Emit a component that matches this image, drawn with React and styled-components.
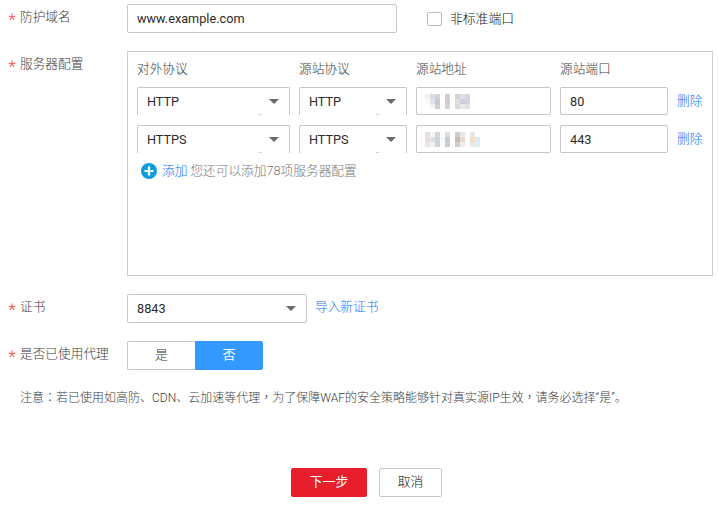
import React from "react";
import styled, { createGlobalStyle, css } from "styled-components";

const GlobalStyle = createGlobalStyle`
  *, *::before, *::after { box-sizing: border-box; }
  body {
    margin: 0;
    background: #fff;
    font: 300 12.7px/20px Roboto, "Noto Sans CJK SC", sans-serif;
    color: #3c3c3c;
  }
`;

const Page = styled.main`
  width: 718px;
  height: 507px;
  padding-top: 4px;
  overflow: hidden;
`;

const FormRow = styled.div`
  display: flex;
  height: ${(p) => p.$height}px;
  margin-bottom: 18px;
`;

const Label = styled.label`
  display: flex;
  width: 127px;
  flex: none;
  padding: 3px 0 0 8px;
  white-space: nowrap;
`;

const Star = styled.svg`
  width: 8px;
  height: 8px;
  margin: 6px 4px 0 0;
  flex: none;
  stroke: #ff5c55;
  stroke-width: 1.1;
  fill: none;
`;

const frame = css`
  border: 1px solid #c6c6c6;
  border-radius: 2px;
  background: #fff;
  color: #2b2b2b;
  font: 400 12.7px/20px Roboto, "Noto Sans CJK SC", sans-serif;
`;

const Input = styled.input`
  ${frame}
  width: ${(p) => p.$width}px;
  height: ${(p) => p.$height || 28}px;
  padding: 0 9px;
  outline: 0;
`;

const SelectBox = styled.div`
  ${frame}
  display: flex;
  align-items: center;
  justify-content: space-between;
  width: ${(p) => p.$width}px;
  height: ${(p) => p.$height || 28}px;
  padding: 0 10px 0 9px;
  ${(p) =>
    p.$open &&
    css`
      border-bottom: 0;
      border-radius: 2px 2px 0 0;
      background: linear-gradient(#d4d4d4, #d4d4d4) right 27px bottom 0 / 3px 1px no-repeat;
    `}
`;

const Arrow = styled.span`
  border: 5px solid transparent;
  border-top: 5px solid #6b6b6b;
  border-bottom: 0;
`;

const CheckRow = styled.label`
  display: flex;
  align-items: center;
  gap: 8px;
  margin-left: 30px;
  color: #111;
  font-size: 12.8px;
`;

const CheckBox = styled.span`
  width: 15px;
  height: 14px;
  border: 1px solid #bbb;
  border-radius: 2px;
`;

const Panel = styled.section`
  width: 586px;
  height: 225px;
  border: 1px solid #ccc;
  padding: 7px 0 0 9px;
`;

const Grid = styled.div`
  display: grid;
  grid-template-columns: 153px 108px 135px 108px 30px;
  column-gap: 9px;
  align-items: center;
  height: ${(p) => p.$height}px;
  margin-bottom: ${(p) => p.$gap}px;
`;

const Link = styled.a`
  color: #0f74ff;
  white-space: nowrap;
`;

const AddRow = styled.div`
  display: flex;
  align-items: center;
  height: 16px;
  padding-left: 4px;
  color: #777;
`;

const AddIcon = styled.svg`
  width: 16px;
  height: 16px;
  margin-right: 5px;
`;

const Hint = styled.span`
  margin-left: 3px;
`;

const MaskedField = styled.div`
  ${frame}
  height: 28px;
  padding: 6px 0 0 8px;
`;

const Mosaic = styled.svg`
  display: block;
`;

const ImportLink = styled(Link)`
  margin: 3px 0 0 8px;
`;

const Segment = styled.button`
  width: 68px;
  height: 29px;
  padding: 0 0 1px;
  border: 1px solid ${(p) => (p.$active ? "#3399ff" : "#c6c6c6")};
  border-right-width: ${(p) => (p.$active ? 1 : 0)}px;
  border-radius: ${(p) => (p.$active ? "0 2px 2px 0" : "2px 0 0 2px")};
  background: ${(p) => (p.$active ? "#3399ff" : "#fff")};
  color: ${(p) => (p.$active ? "#fff" : "#333")};
  font: ${(p) => (p.$active ? 400 : 300)} 13px/20px Roboto, "Noto Sans CJK SC", sans-serif;
`;

const Note = styled.p`
  height: 20px;
  margin: -1px 0 61px 20px;
  font-size: 12px;
  white-space: nowrap;
`;

const CenteredMark = styled.span`
  font-family: "Noto Sans CJK TC", sans-serif;
`;

const Actions = styled.div`
  display: flex;
  gap: 12px;
  padding-left: 291px;
`;

const Button = styled.button`
  width: ${(p) => (p.$primary ? 76 : 63)}px;
  height: 29px;
  padding: 0 0 1px;
  border: 1px solid ${(p) => (p.$primary ? "#e71f2d" : "#c6c6c6")};
  border-radius: 2px;
  background: ${(p) => (p.$primary ? "#e71f2d" : "#fff")};
  color: ${(p) => (p.$primary ? "#fff" : "#111")};
  font: ${(p) => (p.$primary ? 400 : 300)} 12.8px/20px Roboto, "Noto Sans CJK SC", sans-serif;
`;

const servers = [
  {
    protocol: "HTTP",
    port: "80",
    mask: [
      ["#f8f1e5", "#dcdce6", "#d3d3dc", "#fff", "#d2cdd2", "#fff", "#d5d1d8", "#dfdfe7", "#d4d4dd"],
      ["#fcf7ef", "#e0e4f0", "#c8c8d0", "#fff", "#d2cdd2", "#fff", "#e5dcd5", "#c9cedc", "#d4d4dd"],
      ["#fff", "#f4f4f4", "#cdcdd4", "#fff", "#d9d2d2", "#fff", "#d8d8df", "#f0e8e0", "#e4e1e2"],
    ],
  },
  {
    protocol: "HTTPS",
    port: "443",
    mask: [
      ["#eadddd", "#f7f7f8", "#d5d5dc", "#fff", "#dcdce2", "#fff", "#d2cbcd", "#ece6e6", "#fff", "#e8e6e6", "#fff"],
      ["#eadddd", "#dce3e8", "#d0d3d7", "#f8f8f8", "#c9cdd0", "#fff", "#c7b9b5", "#e7d9d6", "#fff", "#f5dfc6", "#dcebf6"],
      ["#eee5e5", "#f0f0f1", "#cdd3d7", "#fff", "#c9cdd0", "#fff", "#d6cbc8", "#f4eeeb", "#fff", "#e6e8eb", "#ddebf5"],
    ],
  },
];

function FieldLabel({ children }) {
  return (
    <Label>
      <Star viewBox="0 0 8 8">
        <path d="M4 .5V4M4 4 .7 2.9M4 4l3.3-1.1M4 4 1.9 7M4 4l2.1 3" />
      </Star>
      {children}
    </Label>
  );
}

function Select({ children, ...props }) {
  return (
    <SelectBox {...props}>
      {children}
      <Arrow />
    </SelectBox>
  );
}

function MaskedAddress({ rows }) {
  return (
    <MaskedField>
      <Mosaic width={rows[0].length * 5} height="15">
        {rows.map((row, y) =>
          row.map((fill, x) => (
            <rect key={`${x}-${y}`} x={x * 5} y={y * 5} width="5" height="5" fill={fill} />
          ))
        )}
      </Mosaic>
    </MaskedField>
  );
}

export default function App() {
  return (
    <Page>
      <GlobalStyle />
      <FormRow $height={29}>
        <FieldLabel>防护域名</FieldLabel>
        <Input $width={270} $height={29} defaultValue="www.example.com" />
        <CheckRow>
          <CheckBox />
          非标准端口
        </CheckRow>
      </FormRow>
      <FormRow $height={225}>
        <FieldLabel>服务器配置</FieldLabel>
        <Panel>
          <Grid $height={20} $gap={8}>
            <span>对外协议</span>
            <span>源站协议</span>
            <span>源站地址</span>
            <span>源站端口</span>
          </Grid>
          {servers.map((server) => (
            <Grid key={server.port} $height={28} $gap={10}>
              <Select $width={153} $open>{server.protocol}</Select>
              <Select $width={108} $open>{server.protocol}</Select>
              <MaskedAddress rows={server.mask} />
              <Input $width={108} defaultValue={server.port} />
              <Link>删除</Link>
            </Grid>
          ))}
          <AddRow>
            <AddIcon viewBox="0 0 16 16">
              <circle cx="8" cy="8" r="8" fill="#0d9ddb" />
              <path d="M8 3.5v9M3.5 8h9" stroke="#fff" strokeWidth="2.2" />
            </AddIcon>
            <Link>添加</Link>
            <Hint>您还可以添加78项服务器配置</Hint>
          </AddRow>
        </Panel>
      </FormRow>
      <FormRow $height={29}>
        <FieldLabel>证书</FieldLabel>
        <Select $width={180} $height={29}>8843</Select>
        <ImportLink>导入新证书</ImportLink>
      </FormRow>
      <FormRow $height={29}>
        <FieldLabel>是否已使用代理</FieldLabel>
        <Segment>是</Segment>
        <Segment $active>否</Segment>
      </FormRow>
      <Note>
        注意<CenteredMark>：</CenteredMark>若已使用如高防、CDN、云加速等代理<CenteredMark>，</CenteredMark>为了保障WAF的安全策略能够针对真实源IP生效<CenteredMark>，</CenteredMark>请务必选择“是”。
      </Note>
      <Actions>
        <Button $primary>下一步</Button>
        <Button>取消</Button>
      </Actions>
    </Page>
  );
}
